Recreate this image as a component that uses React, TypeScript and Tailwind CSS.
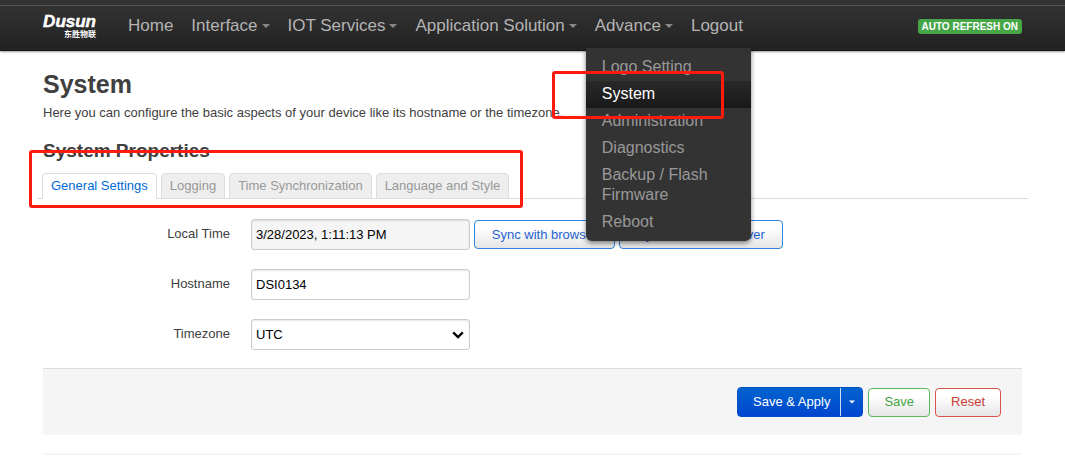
import React, { useState } from 'react';
import { clsx } from 'clsx';

interface NavItem {
  label: string;
  hasMenu?: boolean;
  menu?: string[];
}

const NAV_ITEMS: NavItem[] = [
  { label: 'Home' },
  { label: 'Interface', hasMenu: true },
  { label: 'IOT Services', hasMenu: true },
  { label: 'Application Solution', hasMenu: true },
  {
    label: 'Advance',
    hasMenu: true,
    menu: ['Logo Setting', 'System', 'Administration', 'Diagnostics', 'Backup / Flash Firmware', 'Reboot'],
  },
  { label: 'Logout' },
];

const TABS = ['General Settings', 'Logging', 'Time Synchronization', 'Language and Style'];

const Caret: React.FC<{ className?: string }> = ({ className }) => (
  <svg viewBox="0 0 8 4" className={clsx('inline-block h-1 fill-current', className)} aria-hidden="true">
    <path d="M0 0h8L4 4z" />
  </svg>
);

const Highlight: React.FC<{ className: string }> = ({ className }) => (
  <div className={clsx('pointer-events-none absolute rounded-[3px] border-3 border-[#ff1a0d]', className)} />
);

const Logo = () => (
  <a href="#" className="flex w-[53px] flex-col items-end text-white">
    <span className="text-[17px] leading-4 font-bold italic [-webkit-text-stroke:0.5px_white]">Dusun</span>
    <span className="font-['Noto_Sans_CJK_SC',sans-serif] text-[8px] leading-[8px] font-bold">东胜物联</span>
  </a>
);

const DropdownMenu: React.FC<{ items: string[] }> = ({ items }) => (
  <div className="absolute top-full left-0 z-20 -mt-0.5 w-[165px]">
    <ul className="rounded-b-md bg-[#333] pt-1.5 pb-[5px] shadow-[0_2px_5px_rgba(0,0,0,0.5)]">
      {items.map((item) => (
        <li key={item}>
          <a
            href="#"
            className={clsx(
              'block pt-[3px] pr-4 pb-1 pl-4 text-base leading-5',
              item === 'System' ? 'bg-linear-to-b from-[#292929] to-[#191919] text-white' : 'text-[#999]'
            )}
          >
            {item}
          </a>
        </li>
      ))}
    </ul>
    <Highlight className="top-[23px] -left-[34px] h-12 w-[172px]" />
  </div>
);

const Header = () => (
  <header className="h-[51px] border-b border-[#161616] bg-linear-to-b from-[#353535] to-[#222] shadow-[0_1px_2px_rgba(0,0,0,0.4)]">
    <div className="h-[5px] border-b border-[#555] bg-[#333] box-content" />
    <div className="flex h-11 items-center justify-between px-[43px] pb-1">
      <div className="flex h-full items-center">
        <Logo />
        <nav className="ml-[23px] h-full">
          <ul className="flex h-full">
            {NAV_ITEMS.map((item) => (
              <li key={item.label} className="relative flex items-center">
                <a href="#" className="flex items-center gap-1 px-[9px] text-[17px] leading-5 text-[#b4b4b4]">
                  {item.label}
                  {item.hasMenu && <Caret className="w-2 text-[#888]" />}
                </a>
                {item.menu && (
                  <div className="absolute top-11 left-0">
                    <DropdownMenu items={item.menu} />
                  </div>
                )}
              </li>
            ))}
          </ul>
        </nav>
      </div>
      <button className="h-[15px] rounded-[3px] bg-[#46a546] px-1 text-[10px] leading-[13px] font-bold text-white">
        AUTO REFRESH ON
      </button>
    </div>
  </header>
);

const Field: React.FC<{ id: string; label: string; children: React.ReactNode }> = ({ id, label, children }) => (
  <div className="flex">
    <label htmlFor={id} className="w-[187px] shrink-0 pt-1.5 text-right leading-[18px] text-[#404040]">
      {label}
    </label>
    <div className="ml-[21px] flex items-center gap-1">{children}</div>
  </div>
);

const inputClass =
  'h-[31px] w-[219px] rounded-[3px] border border-[#ccc] text-black shadow-[inset_0_1px_2px_rgba(0,0,0,0.1)]';
const buttonClass = 'h-[29px] rounded-[4px] border bg-linear-to-b from-white from-25% to-[#e6e6e6]';

export default function App() {
  const [activeTab, setActiveTab] = useState('General Settings');
  const [hostname, setHostname] = useState('DSI0134');

  return (
    <div className="bg-white font-['Liberation_Sans',Arial,sans-serif] text-[13px] leading-[18px] text-[#404040]">
      <Header />

      <main className="px-[43px] pt-[15px] pb-2.5">
        <h1 className="text-[25px] leading-9 font-bold">System</h1>
        <p className="pt-0.5">
          Here you can configure the basic aspects of your device like its hostname or the timezone.
        </p>

        <h3 className="mt-[11px] text-[19px] leading-9 font-bold">System Properties</h3>

        {/* Tabs */}
        <div className="relative -mx-1.5 mt-1 border-b border-[#ddd] px-[5px]">
          <ul className="flex gap-1">
            {TABS.map((tab) => (
              <li key={tab} className="-mb-px">
                <button
                  onClick={() => setActiveTab(tab)}
                  className={clsx(
                    'h-[26px] rounded-t-[4px] border border-[#ddd] px-2',
                    tab === activeTab ? 'border-b-white bg-white text-[#0069d6]' : 'bg-[#eee] text-[#999]'
                  )}
                >
                  {tab}
                </button>
              </li>
            ))}
          </ul>
          <Highlight className="-top-[23px] -left-2 h-[58px] w-[494px]" />
        </div>

        {/* General settings form */}
        <form className="flex flex-col gap-[19px] pt-5" onSubmit={(e) => e.preventDefault()}>
          <Field id="localtime" label="Local Time">
            <input
              id="localtime"
              readOnly
              value="3/28/2023, 1:11:13 PM"
              className={clsx(inputClass, 'bg-[#f5f5f5] px-1')}
            />
            <button type="button" className={clsx(buttonClass, 'w-[141px] border-[#2f86e0] text-[#1f63d2]')}>
              Sync with browser
            </button>
            <button type="button" className={clsx(buttonClass, 'w-[164px] border-[#2f86e0] text-[#1f63d2]')}>
              Sync with NTP-Server
            </button>
          </Field>
          <Field id="hostname" label="Hostname">
            <input
              id="hostname"
              value={hostname}
              onChange={(e) => setHostname(e.target.value)}
              className={clsx(inputClass, 'px-1')}
            />
          </Field>
          <Field id="timezone" label="Timezone">
            <div className="relative">
              <select id="timezone" className={clsx(inputClass, 'appearance-none bg-white px-1')}>
                <option>UTC</option>
              </select>
              <svg
                viewBox="0 0 12 8"
                className="pointer-events-none absolute top-3 right-1.5 h-2 w-3 fill-none stroke-black stroke-[2.4]"
                aria-hidden="true"
              >
                <path d="M1.2 1.4 6 6l4.8-4.6" />
              </svg>
            </div>
          </Field>
        </form>

        <div className="mt-[18px] flex h-[67px] items-center justify-end gap-[5px] rounded-b-[3px] border-t border-[#ddd] bg-[#f5f5f5] pr-[21px]">
          <div className="flex h-[30px] overflow-hidden rounded-[4px] border border-[#0051c8] bg-linear-to-b from-[#0064cd] to-[#0044d0] text-white">
            <button className="pr-2.5 pl-[15px]">Save &amp; Apply</button>
            <button aria-label="More apply options" className="flex w-[22px] items-center justify-center border-l border-white/80">
              <Caret className="w-1.5" />
            </button>
          </div>
          <button className={clsx(buttonClass, 'px-[15px] border-[#5cb85c] text-[#46a546]')}>Save</button>
          <button className={clsx(buttonClass, 'px-[15px] border-[#d9534f] text-[#c43c35]')}>Reset</button>
        </div>

        <div className="mt-[18px] border-t-2 border-[#f5f5f5]" />
      </main>
    </div>
  );
}
